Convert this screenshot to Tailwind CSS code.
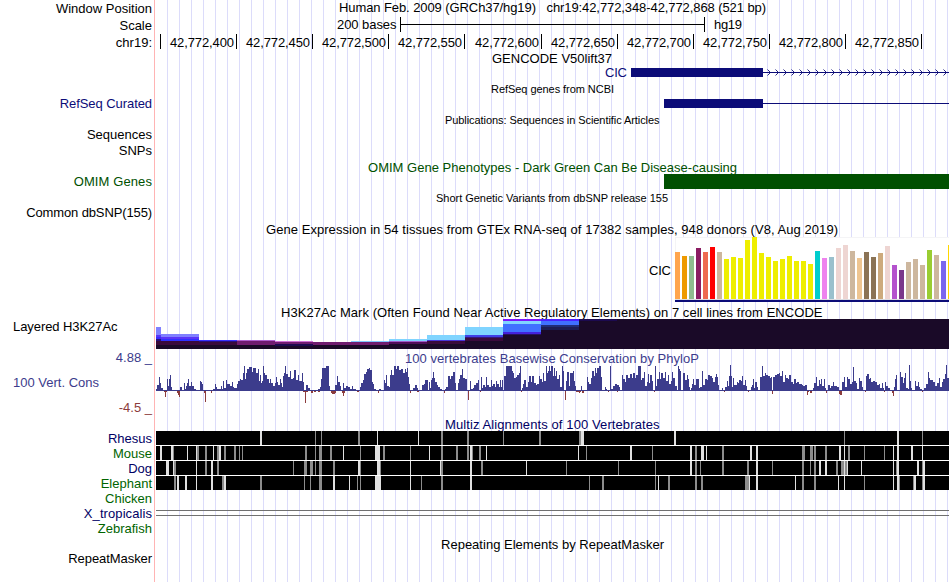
<!DOCTYPE html>
<html lang="en">
<head>
<meta charset="utf-8">
<title>Genome Browser hg19 chr19:42,772,348-42,772,868</title>
<script src="https://cdn.jsdelivr.net/npm/@tailwindcss/browser@4"></script>
</head>
<body class="bg-white overflow-hidden">
<div class="flex w-[950px] h-[582px] font-['Liberation_Sans',Arial,sans-serif] text-[13px] leading-[15px] text-black">
  <aside class="flex flex-col w-[155px] shrink-0 border-r border-[#ffb4b4] pr-[2px] pt-px text-right whitespace-nowrap">
    <div>Window Position</div>
    <div class="mt-[2px]">Scale</div>
    <div class="mt-[2px]">chr19:</div>
    <div class="mt-[46px] tracking-[-0.07px] text-[#0c0c78]">RefSeq Curated</div>
    <div class="mt-[16px]">Sequences</div>
    <div class="mt-px">SNPs</div>
    <div class="mt-[16px] tracking-[0.1px] text-[#005000]">OMIM Genes</div>
    <div class="mt-[16px] tracking-[-0.12px]">Common dbSNP(155)</div>
    <div class="mt-[99px] pl-[13px] text-left tracking-[-0.07px]">Layered H3K27Ac</div>
    <div class="mt-[16px] text-[#3c3c8c]">4.88 _</div>
    <div class="mt-[10px] pl-[13px] text-left text-[#3c3c8c]">100 Vert. Cons</div>
    <div class="mt-[10px] text-[#8c3c3c]">-4.5 _</div>
    <div class="mt-[16px] text-[#000064]">Rhesus</div>
    <div class="text-[#006400]">Mouse</div>
    <div class="text-[#000064]">Dog</div>
    <div class="text-[#006400]">Elephant</div>
    <div class="text-[#006400]">Chicken</div>
    <div class="tracking-[0.08px] text-[#000064]">X_tropicalis</div>
    <div class="text-[#006400]">Zebrafish</div>
    <div class="mt-[15px] tracking-[-0.07px]">RepeatMasker</div>
  </aside>
  <main class="relative flex flex-col w-[794px] shrink-0">
    <svg id="grid" class="absolute inset-0 -z-10" width="794" height="582" viewBox="155 0 794 582" shape-rendering="crispEdges"></svg>

    <!-- position, scale bar and ruler -->
    <svg id="ruler" class="block shrink-0" width="794" height="50" viewBox="155 0 794 50">
      <text x="339" y="12" textLength="427" xml:space="preserve">Human Feb. 2009 (GRCh37/hg19)   chr19:42,772,348-42,772,868 (521 bp)</text>
      <text x="337" y="29" textLength="59.5">200 bases</text>
      <path d="M400.5 17V32M704.5 17V32M400 24.5H705" stroke="#000" fill="none" shape-rendering="crispEdges"/>
      <text x="714" y="29" textLength="28">hg19</text>
    </svg>

    <!-- GENCODE and RefSeq -->
    <svg id="genes" class="block shrink-0" width="794" height="62" viewBox="155 50 794 62">
      <text x="492" y="63" textLength="120">GENCODE V50lift37</text>
      <text x="605" y="77" textLength="22" fill="#0c0c78">CIC</text>
      <g fill="#0c0c78" shape-rendering="crispEdges">
        <rect x="631" y="68" width="132" height="9"/><rect x="763" y="72" width="186" height="1"/>
        <rect x="664" y="99" width="99" height="9"/><rect x="763" y="103" width="186" height="1"/>
      </g>
      <text x="491" y="93" font-size="11" textLength="123">RefSeq genes from NCBI</text>
    </svg>

    <!-- publications, OMIM, dbSNP -->
    <svg class="block shrink-0" width="794" height="109" viewBox="155 112 794 109">
      <text x="445" y="124" font-size="11" textLength="214.5">Publications: Sequences in Scientific Articles</text>
      <text x="368" y="172" textLength="369" fill="#005000">OMIM Gene Phenotypes - Dark Green Can Be Disease-causing</text>
      <rect x="664" y="174" width="285" height="15" fill="#005000"/>
      <text x="436" y="202" font-size="11" textLength="232">Short Genetic Variants from dbSNP release 155</text>
    </svg>

    <!-- GTEx -->
    <svg id="gtex" class="block shrink-0" width="794" height="82" viewBox="155 221 794 82">
      <text x="266" y="234" textLength="572">Gene Expression in 54 tissues from GTEx RNA-seq of 17382 samples, 948 donors (V8, Aug 2019)</text>
      <text x="649" y="275" textLength="22">CIC</text>
      <g shape-rendering="crispEdges">
        <rect x="675" y="237" width="274" height="63" fill="#f4f4f6"/>
        <rect x="676" y="238" width="273" height="61" fill="#fff"/>
        <rect x="675" y="299" width="274" height="1" fill="#dcdce0"/>
        <rect x="675" y="300" width="274" height="2" fill="#0c0c78"/>
      </g>
    </svg>

    <!-- H3K27Ac -->
    <svg id="h3k" class="block shrink-0" width="794" height="46" viewBox="155 303 794 46">
      <text x="281" y="317" textLength="541.5">H3K27Ac Mark (Often Found Near Active Regulatory Elements) on 7 cell lines from ENCODE</text>
    </svg>

    <!-- PhyloP -->
    <svg id="phylop" class="block shrink-0" width="794" height="66" viewBox="155 349 794 66">
      <text x="405" y="363" textLength="294" fill="#3c3c8c">100 vertebrates Basewise Conservation by PhyloP</text>
    </svg>

    <!-- Multiz and RepeatMasker -->
    <svg id="multiz" class="block shrink-0" width="794" height="167" viewBox="155 415 794 167">
      <text x="445" y="429" textLength="214.5" fill="#000064">Multiz Alignments of 100 Vertebrates</text>
      <path d="M156 510.5H949M156 515.5H949" stroke="#707070" shape-rendering="crispEdges"/>
      <text x="441" y="549" textLength="223">Repeating Elements by RepeatMasker</text>
    </svg>
  </main>
</div>
<script>
const NS = 'http://www.w3.org/2000/svg';
const $ = id => document.getElementById(id);
function add(parent, tag, attrs, text) {
  const e = document.createElementNS(NS, tag);
  for (const k in attrs) e.setAttribute(k, attrs[k]);
  if (text) e.textContent = text;
  parent.appendChild(e);
  return e;
}
const rect = (p, x, y, w, h, fill) => add(p, 'rect', {x, y, width: w, height: h, fill, 'shape-rendering': 'crispEdges'});

// guide lines every 12 px
for (let x = 167; x < 949; x += 12) rect($('grid'), x, 0, 1, 582, '#dcdcfa');

// ruler ticks
[160,236,312,388,464,541,617,693,769,845,921].forEach((x, i) => {
  rect($('ruler'), x, 34, 1, 15, '#000');
  if (i) add($('ruler'), 'text', {x: x - 66, y: 47, textLength: 64}, '42,772,' + (350 + i * 50));
});

// strand arrows
let arrows = '';
for (let x = 767.5; x < 946; x += 8) arrows += `M${x} 69.5L${x + 3} 72.5L${x} 75.5`;
add($('genes'), 'path', {d: arrows, stroke: '#0c0c78', 'stroke-width': .9, fill: 'none'});

// tissue expression: bar top offsets in thirds of a pixel from y=160
const tops = [276,288,288,264,276,261,276,297,291,294,240,231,279,291,303,297,288,303,303,312,273,294,291,264,255,273,294,276,291,279,258,315,330,306,297,315,270,285,303,255];
const Y = '#eeee00', B = '#cdb79e', P = '#eed5d2';
const tissue = ['#ffa54f','#ee9a00','#8fbc8f','#8b1c62','#ee6a50','#ff0000',B,Y,Y,Y,Y,Y,Y,Y,Y,Y,Y,Y,Y,Y,'#00cdcd','#ee82ee','#9ac0cd',P,P,B,'#eec591','#8b7355','#8b7355','#cdaa7d',P,'#b452cd','#7a378b',B,B,B,'#9acd32',B,'#7a67ee','#ffd700'];
tops.forEach((t, i) => { const y = 160 + t / 3; rect($('gtex'), 675 + i * 7, y, Math.min(5, 949 - 675 - i * 7), 299 - y, tissue[i]); });

// layered signal: [x0, x1, [top, colour]...]
const D = '#1a0a28';
[[156,161,[327,'#8080ff'],[335,'#5a34f8'],[337,'#3c28ff'],[339,'#28107c'],[341,'#3a0a3c'],[345,D]],
 [161,199,[334,'#8080ff'],[337,'#5a34f8'],[339,'#3030ff'],[341,'#3a0a3c'],[345,D]],
 [199,237,[340,'#3a30ff'],[341,'#28107c'],[342,'#3a0a3c'],[345,D]],
 [237,275,[340,'#b060d0'],[341,'#701c70'],[345,D]],
 [275,313,[341,'#d070d8'],[342,'#701c70'],[344,'#1c0a50'],[346,D]],
 [313,351,[342,'#701c70'],[345,D]],
 [351,389,[341,'#80c8ff'],[342,'#701c70'],[345,D]],
 [389,427,[339,'#80d4ff'],[341,'#a05ac8'],[342,'#500c58'],[344,D]],
 [427,465,[335,'#80d4ff'],[340,'#4834d8'],[341,'#3a0a3c'],[344,D]],
 [465,503,[327,'#80d4ff'],[335,'#4040e8'],[337,'#34187c'],[338,'#3a0a3c'],[341,D]],
 [503,541,[319,'#7c14fc'],[321,'#80d4ff'],[324,'#4070ff'],[332,'#4420dc'],[334,'#281060'],[335,D]],
 [541,579,[319,'#4c20ff'],[321,'#4070ff'],[325,'#202c78'],[327,'#1c1c54'],[330,D]],
 [579,617,[319,'#1c0a50'],[321,D]],
 [617,949,[319,D]]
].forEach(([a, b, ...l]) => l.forEach(([y, c], i) => rect($('h3k'), a, y, b - a, (l[i + 1] ? l[i + 1][0] : 349) - y, c)));

// conservation profile, three stretches of offset:height (offset in thirds of a pixel)
const wig = {
150: '18:2 22:6 27:14 30:8 33:3 39:1 51:12 54:5 57:12 60:16 63:4 66:1 90:4 96:1 102:8 105:2 108:5 111:8 114:12 117:5 123:9 126:5 131:2 138:1 150:10 153:9 156:7 160:1 171:1 189:2 195:7 198:4 201:2 213:5 216:2 219:10 222:3 228:11 232:7 240:5 246:9 249:4 252:3 261:7 264:10 270:12 273:11 279:18 282:25 285:12 288:18 291:22 297:24 306:19 309:23 318:18 324:22 327:10 330:16 333:8 336:10 339:25 342:18 345:16 351:12 357:8 360:12 363:8 369:5 375:8 378:14 381:9 384:6 390:12 393:8 396:4 399:15 402:18 404:25 408:17 414:14 420:20 423:12 429:13 432:21 438:11 444:16 447:10 456:18 459:9 462:1 468:6 474:3 480:1 504:2 510:4 513:12 516:23 528:25 537:5 540:1 555:6 561:15 564:9 570:5 573:1 579:8 582:3 588:5 594:4 600:2 606:5 609:2 618:1 630:4 633:8 639:11 642:17 648:19 651:22 657:23 660:21 666:9 669:7 672:2 678:1 687:2 693:1 702:11 705:8 708:16 711:5 717:4 720:16 723:21 726:16 732:25 738:22 741:25 747:21 753:22 759:18 765:22 768:19 771:23 774:14 777:7 780:1 789:3 795:6 801:3 804:1',
420: '0:1 6:6 12:7 15:11 24:1 27:9 30:3 33:11 36:13 39:19 42:13 45:9 51:6 54:4 60:2 66:1 75:2 78:4 84:15 90:12 93:15 99:19 105:8 108:1 114:8 117:12 120:16 126:22 129:13 135:12 141:1 150:10 153:2 159:3 162:6 168:8 174:11 177:1 183:14 186:3 189:6 195:4 198:14 201:6 207:4 213:11 216:5 219:7 225:4 228:10 231:7 237:4 240:11 243:4 246:11 249:1 252:15 258:25 276:20 279:18 282:13 288:14 291:16 297:18 300:25 303:1 306:3 309:7 312:11 318:4 324:9 327:15 333:9 336:15 342:8 348:6 351:7 357:15 360:12 366:9 369:18 372:10 378:25 381:18 384:20 387:25 390:20 393:25 399:15 402:23 405:15 408:20 411:12 417:16 420:4 426:25 429:20 432:1 438:10 441:19 447:5 450:18 459:20 462:10 465:5 468:1 483:5 486:1 501:14 504:9 507:7 513:13 516:20 522:15 525:23 528:18 531:23 537:25 543:14 546:1 555:4 558:2 561:1 570:25 573:2 579:5 585:7 591:6 597:4 600:1 606:16 609:12 615:9 618:16 624:13 630:17 636:13 639:18 645:13 648:16 654:25 663:11 666:13 672:19 675:5 681:9 684:17 687:8 690:16 696:10 699:1 705:25 708:5 711:12 717:19 720:12 723:18 729:13 735:19 738:10 744:16 747:7 753:10 756:19 759:13 765:5 771:1 774:25 777:22 780:20 783:1 789:18 795:11 801:16 804:12 807:4',
690: '0:1 3:3 6:7 9:12 12:6 18:12 27:3 30:4 36:20 39:6 45:12 51:11 54:16 60:15 66:13 69:9 75:14 78:17 81:14 84:6 87:1 96:3 99:1 105:4 111:10 114:5 117:15 120:26 123:15 126:4 129:13 132:6 141:9 144:8 147:11 153:10 156:15 159:6 165:11 168:5 171:1 183:4 186:6 189:12 192:3 195:9 201:4 204:1 210:14 216:25 219:15 225:18 228:16 234:15 240:13 243:14 246:1 249:14 255:16 261:17 267:18 270:15 276:20 279:9 285:16 288:13 294:12 297:16 303:9 309:7 312:12 318:8 321:9 327:7 336:6 339:5 345:6 351:1 369:3 372:8 378:14 381:5 387:11 390:7 393:12 396:5 402:12 405:3 408:1 414:6 420:3 423:5 429:9 432:5 441:4 447:1 456:9 462:14 465:4 471:14 474:12 480:7 486:9 489:24 492:10 498:8 501:2 507:13 510:10 516:4 519:1 528:15 531:17 537:12 540:13 543:9 549:10 555:9 561:6 567:7 570:3 576:8 579:3 582:1 585:9 588:5 594:3 600:1 612:4 615:12 618:16 621:1 630:19 633:14 639:8 642:13 645:18 648:3 654:2 657:26 660:10 663:3 666:1 675:10 678:5 684:9 687:4 690:2 696:1 702:3 708:7 714:19 717:13 720:11 729:9 735:5 741:8 747:13 750:4 756:9 759:12 765:17 768:26 771:13 777:1'};
for (const o in wig) {
  const p = wig[o].split(' ').map(s => s.split(':').map(Number));
  p.forEach(([x, h], i) => {
    const end = p[i + 1] ? p[i + 1][0] : (o == 690 ? 777 : 810);
    const a = Math.round(+o + x / 3), b = Math.round(+o + end / 3);
    if (b > a) rect($('phylop'), a, 391 - h, b - a, h, '#3c3c8c');
  });
}
[[164,3,1],[165,1,6],[177,3,2],[178,2,4],[179,1,6],[204,2,2],[205,1,11],[211,1,2],[303,5,1],[305,1,12],[311,2,2],[314,2,1],[318,2,1],[331,5,2],[332,3,3],[342,3,2],[343,1,5],[357,2,1],[378,1,2],[410,1,2],[417,2,1],
 [444,1,2],[468,1,9],[480,1,1],[521,1,1],[565,1,9],[576,5,1],[579,1,2],[582,2,2],[608,1,1],[617,1,1],[654,1,1],
 [724,1,1],[748,1,1],[772,1,3],[807,1,4],[808,1,1],[810,2,2],[826,1,2],[839,3,3],[840,2,4],[865,1,1],[884,1,1],[892,2,2],[893,1,5],[922,1,1]
].forEach(([x, w, h]) => rect($('phylop'), x, 391, w, h, '#8c3c3c'));

// pairwise alignments: x,width,tone (L light, G grey)
['260,2,L;315,1,G;321,1,G;358,2,G;377,1,L;418,1,L;441,2,G;467,2,G;503,1,G;539,2,G;579,2,G;581,3,L;674,2,L;844,1,G;897,2,L;922,1,G',
 '160,2,L;171,2,L;173,1,G;187,1,L;196,1,L;197,2,G;205,2,G;213,1,L;217,2,G;219,2,L;224,2,G;234,2,G;239,1,G;242,1,G;305,2,G;315,1,G;319,3,G;330,2,G;343,1,L;360,1,G;375,5,L;383,2,G;410,1,G;429,1,L;441,2,G;456,2,G;467,2,G;470,2,L;472,1,G;479,2,G;486,1,L;578,1,L;586,1,G;630,2,L;652,1,G;690,2,L;695,2,G;701,3,L;706,1,L;722,2,G;750,2,L;756,2,L;802,3,G;810,3,G;814,2,G;825,2,G;839,2,L;844,1,L;848,2,G;864,1,G;884,1,G;893,1,L;897,2,L;911,2,L;922,1,L',
 '166,3,L;173,1,L;174,2,G;196,1,L;205,2,G;211,2,L;217,2,G;293,1,G;304,3,G;310,3,G;315,1,G;319,3,G;333,2,G;358,2,L;360,1,G;377,3,L;380,1,G;410,1,L;440,1,L;441,2,G;470,2,L;481,2,G;526,1,L;566,1,G;618,1,G;655,1,G;690,2,L;695,2,G;700,1,G;722,2,G;747,2,G;756,2,L;772,1,G;802,2,G;810,1,G;814,2,G;819,2,L;825,2,L;836,2,G;841,3,G;844,1,L;845,2,G;847,1,L;861,1,L;893,1,L;896,1,G;897,2,L;917,2,L;922,1,G;923,2,L',
 '174,2,G;177,2,L;185,2,L;196,1,L;211,2,L;222,2,G;224,2,L;260,2,G;304,1,G;310,1,G;319,3,G;333,2,L;349,1,L;357,1,G;360,1,G;375,6,L;410,1,L;421,1,G;441,2,G;470,2,L;589,1,G;602,2,G;655,1,G;658,1,L;668,2,G;695,2,G;701,2,G;745,4,G;749,1,L;756,2,L;795,1,L;802,2,G;814,2,G;838,1,L;844,1,L;864,1,G;893,1,L;897,2,L;899,1,G;913,1,G;914,2,L;922,1,G;923,2,L'
].forEach((row, r) => {
  const y = 431 + r * 15;
  if (r) rect($('multiz'), 156, y - 1, 793, 1, '#fff');
  rect($('multiz'), 156, y, 793, 14, '#000');
  row.split(';').forEach(s => { const [x, w, t] = s.split(','); rect($('multiz'), x, y, w, 14, t === 'L' ? '#e0e0e0' : '#8c8c8c'); });
});
</script>
</body>
</html>
